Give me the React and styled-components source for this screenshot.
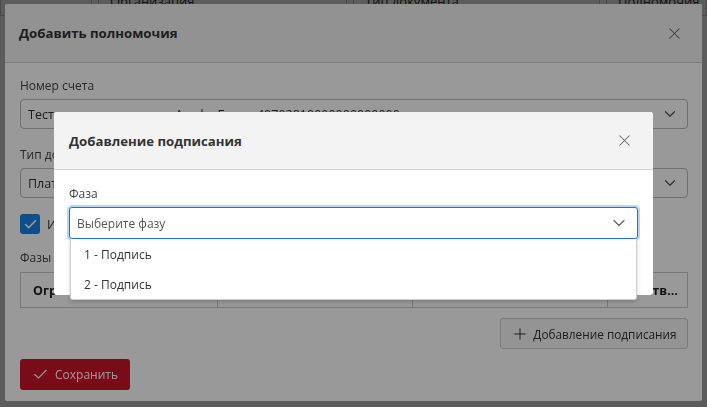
import React from 'react'
import styled, { createGlobalStyle } from 'styled-components'
import { X, ChevronDown, Check, Plus } from 'lucide-react'

const GlobalStyle = createGlobalStyle`
  html, body {
    margin: 0;
    padding: 0;
  }
  body {
    font-family: 'Open Sans', 'Noto Sans', sans-serif;
    font-size: 12px;
    color: #333;
    background: #fff;
    overflow: hidden;
  }
  * {
    box-sizing: border-box;
  }
`

const bgColumns = [
  { w: '92px', title: '' },
  { w: '249px', title: 'Организация' },
  { w: '247px', title: 'Тип документа' },
  { w: '1fr', title: 'Полномочия' },
]

const App = () => {
  return (
    <>
      <GlobalStyle />
      <Page>
        <BgHead>
          {bgColumns.map((c, i) => (
            <BgCell key={i} $w={c.w}>
              {c.title}
            </BgCell>
          ))}
        </BgHead>
      </Page>

      <Overlay $pad="4px 5px 6px">
        <OuterModal>
          <ModalHeader $h="59px" $pl="14px" $pr="18px">
            <ModalTitle>Добавить полномочия</ModalTitle>
            <CloseBtn>
              <X size={19} strokeWidth={1.3} />
            </CloseBtn>
          </ModalHeader>
          <OuterBody>
            <Field>
              <Label>Номер счета</Label>
              <Select>
                <span>Тестовая организация - Альфа-Банк - 40702810000000000000</span>
                <ChevronDown size={18} strokeWidth={1.6} />
              </Select>
            </Field>
            <Field $mt="18px">
              <Label>Тип документа</Label>
              <Select>
                <span>Платежное поручение</span>
                <ChevronDown size={18} strokeWidth={1.6} />
              </Select>
            </Field>
            <CheckRow>
              <CheckBox>
                <Check size={15} strokeWidth={2.4} color="#fff" />
              </CheckBox>
              <span>Использовать фазы подписания</span>
            </CheckRow>
            <Label $mt="16px">Фазы подписания</Label>
            <Table>
              <Th $w="197px">
                <ThText>Ограничение</ThText>
              </Th>
              <Th $w="195px">
                <ThText>Подписант</ThText>
              </Th>
              <Th $w="195px">
                <ThText>Тип подписи</ThText>
              </Th>
              <Th $w="81px" $last>
                <ThText>Действия над фазой</ThText>
              </Th>
            </Table>
            <ActionRow>
              <GhostButton>
                <Plus size={18} strokeWidth={1.3} />
                Добавление подписания
              </GhostButton>
            </ActionRow>
            <SaveButton>
              <Check size={17} strokeWidth={1.6} />
              Сохранить
            </SaveButton>
          </OuterBody>
        </OuterModal>
      </Overlay>

      <Overlay $pad="112px 0 0" $center>
        <InnerModal>
          <ModalHeader $h="58px" $pl="15px" $pr="19px">
            <ModalTitle>Добавление подписания</ModalTitle>
            <CloseBtn>
              <X size={19} strokeWidth={1.3} />
            </CloseBtn>
          </ModalHeader>
          <InnerBody>
            <Label>Фаза</Label>
            <SelectWrap>
              <FocusSelect>
                <Placeholder>Выберите фазу</Placeholder>
                <ChevronDown size={20} strokeWidth={1.5} />
              </FocusSelect>
              <Dropdown>
                <Option>1 - Подпись</Option>
                <Option>2 - Подпись</Option>
              </Dropdown>
            </SelectWrap>
          </InnerBody>
        </InnerModal>
      </Overlay>
    </>
  )
}

const Page = styled.div`
  width: 707px;
  height: 407px;
  background: #fff;
`

const BgHead = styled.div`
  display: flex;
  gap: 6px;
  margin-top: -14px;
`

const BgCell = styled.div`
  flex: ${(p) => (p.$w === '1fr' ? '1' : `0 0 ${p.$w}`)};
  height: 30px;
  border: 1px solid #ccc;
  padding-left: 11px;
  display: flex;
  align-items: center;
  font-size: 13px;
  color: #333;
`

const Overlay = styled.div`
  position: fixed;
  inset: 0;
  background: rgba(0, 0, 0, 0.4);
  display: flex;
  justify-content: center;
  align-items: ${(p) => (p.$center ? 'flex-start' : 'stretch')};
  padding: ${(p) => p.$pad};
`

const OuterModal = styled.div`
  flex: 1;
  background: #fff;
  border-radius: 2px;
  display: flex;
  flex-direction: column;
  overflow: hidden;
`

const InnerModal = styled.div`
  width: 599px;
  height: 183px;
  background: #fff;
  border-radius: 3px;
  display: flex;
  flex-direction: column;
`

const ModalHeader = styled.div`
  height: ${(p) => p.$h};
  flex: 0 0 auto;
  background: #f3f3f3;
  border-bottom: 1px solid #d2d2d2;
  border-radius: 3px 3px 0 0;
  display: flex;
  align-items: center;
  justify-content: space-between;
  padding: 0 ${(p) => p.$pr} 0 ${(p) => p.$pl};
`

const ModalTitle = styled.div`
  font-size: 13.2px;
  font-weight: 700;
  color: #333;
`

const CloseBtn = styled.div`
  display: flex;
  color: #666;
`

const OuterBody = styled.div`
  padding: 15px 14px 13px 15px;
  display: flex;
  flex-direction: column;
`

const InnerBody = styled.div`
  padding: 16px 15px 0 15px;
  display: flex;
  flex-direction: column;
`

const Field = styled.div`
  display: flex;
  flex-direction: column;
  margin-top: ${(p) => p.$mt || '0'};
`

const Label = styled.div`
  font-size: 12px;
  line-height: 16px;
  color: #444;
  margin-top: ${(p) => p.$mt || '0'};
  margin-bottom: 5px;
  white-space: nowrap;
`

const Select = styled.div`
  height: 30px;
  border: 1px solid #b9b9b9;
  border-radius: 4px;
  display: flex;
  align-items: center;
  justify-content: space-between;
  padding: 0 8px 0 7px;
  font-size: 12.5px;
  color: #333;
  white-space: nowrap;
  svg {
    color: #555;
  }
`

const CheckRow = styled.div`
  display: flex;
  align-items: center;
  gap: 7px;
  margin-top: 16px;
  font-size: 12.5px;
  color: #333;
`

const CheckBox = styled.div`
  width: 20px;
  height: 20px;
  border-radius: 3px;
  background: #1684e6;
  display: flex;
  align-items: center;
  justify-content: center;
`

const Table = styled.div`
  display: flex;
  margin-top: 1px;
  border: 1px solid #c8c8c8;
  height: 36px;
`

const Th = styled.div`
  flex: 0 0 ${(p) => p.$w};
  min-width: 0;
  border-right: ${(p) => (p.$last ? 'none' : '1px solid #c8c8c8')};
  padding: 0 10px 0 12px;
  display: flex;
  align-items: center;
`

const ThText = styled.span`
  display: block;
  min-width: 0;
  font-size: 12.5px;
  font-weight: 700;
  color: #222;
  white-space: nowrap;
  overflow: hidden;
  text-overflow: ellipsis;
`

const ActionRow = styled.div`
  display: flex;
  justify-content: flex-end;
  margin-top: 10px;
`

const GhostButton = styled.div`
  width: 188px;
  height: 31px;
  border: 1px solid #cdcdcd;
  border-radius: 3px;
  background: #f7f7f7;
  display: flex;
  align-items: center;
  justify-content: center;
  gap: 4px;
  font-size: 11.8px;
  color: #333;
`

const SaveButton = styled.div`
  width: 110px;
  height: 31px;
  margin-top: 10px;
  border-radius: 3px;
  background: #cc1329;
  color: #fff;
  display: flex;
  align-items: center;
  justify-content: center;
  gap: 6px;
  font-size: 12px;
`

const SelectWrap = styled.div`
  position: relative;
`

const FocusSelect = styled.div`
  height: 32px;
  border: 1px solid #1f6fd6;
  border-radius: 3px;
  box-shadow: 0 0 0 2px rgba(120, 180, 240, 0.55);
  display: flex;
  align-items: center;
  justify-content: space-between;
  padding: 0 8px 0 7px;
  svg {
    color: #666;
  }
`

const Placeholder = styled.span`
  font-size: 12px;
  color: #555;
`

const Dropdown = styled.div`
  position: absolute;
  top: 32px;
  left: 1px;
  right: 1px;
  background: #fff;
  border: 1px solid #cfcfcf;
  border-top: none;
  border-radius: 0 0 3px 3px;
  box-shadow: 0 2px 4px rgba(0, 0, 0, 0.18);
  z-index: 5;
`

const Option = styled.div`
  height: 30px;
  display: flex;
  align-items: center;
  padding-left: 13px;
  font-size: 12px;
  color: #333;
`

export default App
